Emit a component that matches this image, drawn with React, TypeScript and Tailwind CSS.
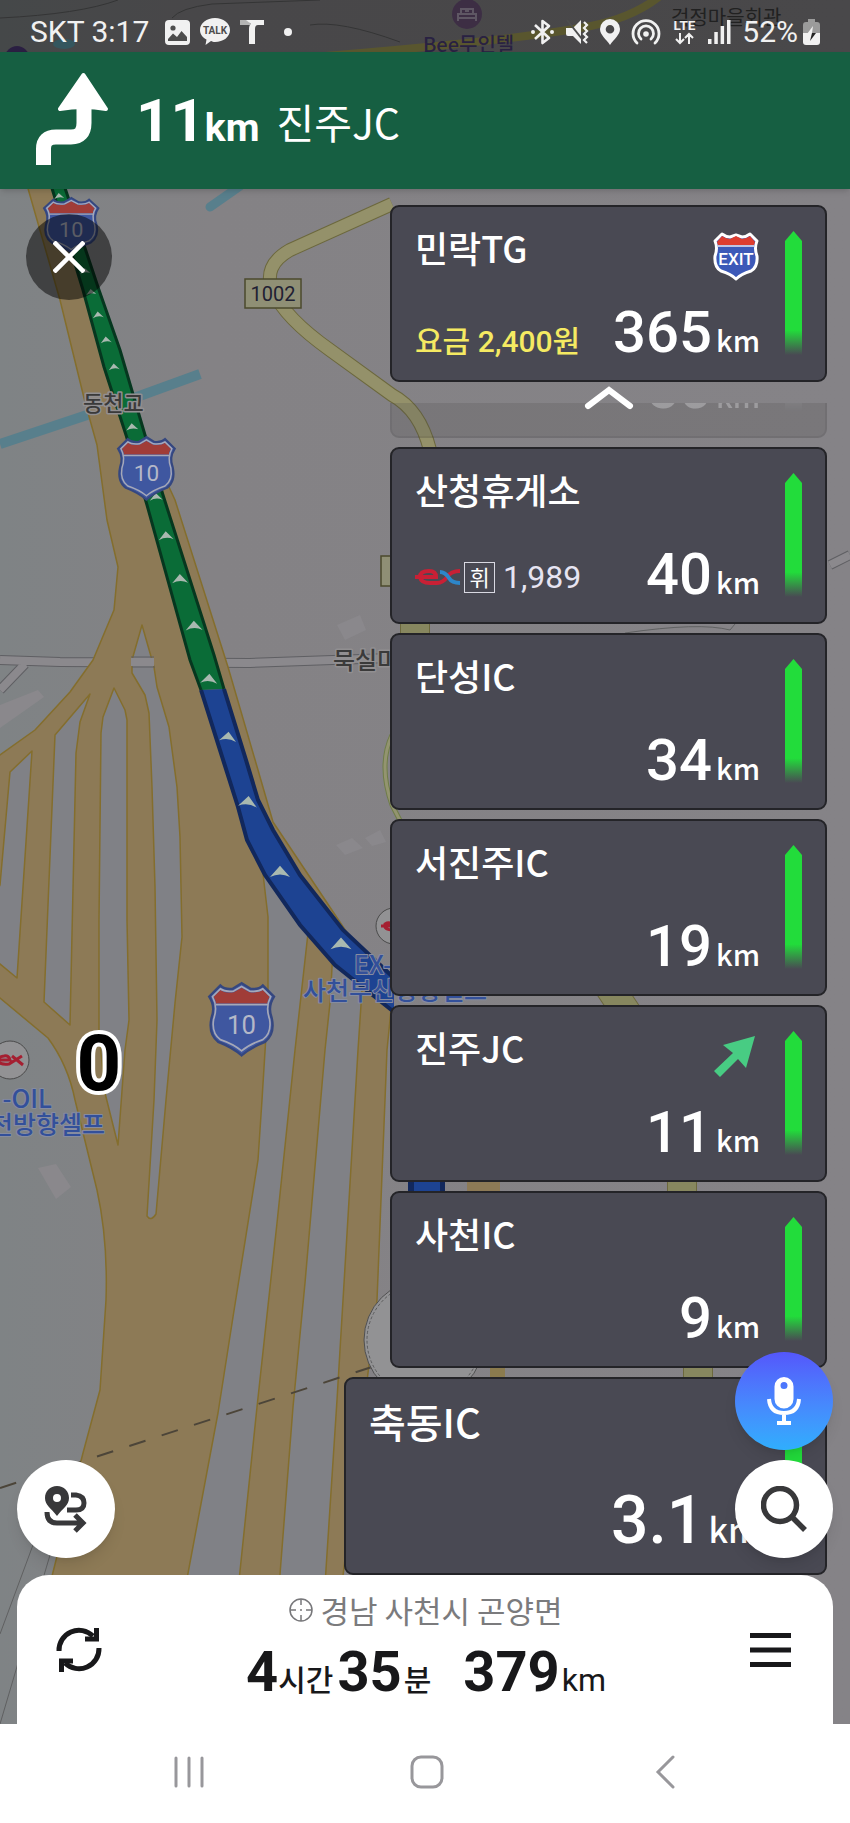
import type { ReactNode } from 'react';

const KR = "font-['Noto_Sans_CJK_KR',sans-serif]";
const NUM = "font-['Roboto','Noto_Sans_CJK_KR',sans-serif]";

type Stop = {
  name: string;
  distance: string;
  detail?: ReactNode;
  icon?: ReactNode;
  large?: boolean;
};

function ShieldShape({ transform, label }: { transform: string; label: string }) {
  return (
    <g transform={transform}>
      <path
        d="M30 1 L22 6 Q15 7 11 3 L1 13 Q7 22 3 32 Q0 46 9 53 Q22 58 30 65 Q38 58 51 53 Q60 46 57 32 Q53 22 59 13 L49 3 Q45 7 38 6 Z"
        fill="#3f57a0"
        stroke="#35477f"
        strokeWidth="2"
      />
      <path d="M30 5 L23 9 Q15 10 11 7 L5 13 Q7 16 7 19 H53 Q53 16 55 13 L49 7 Q45 10 37 9 Z" fill="#a03c38" />
      <path
        d="M30 4 L23 8 Q15 9 11 6 L4 13 Q9 22 5 33 Q3 45 11 51 Q23 55 30 61 Q37 55 49 51 Q57 45 55 33 Q51 22 56 13 L49 6 Q45 9 37 8 Z M7 20 H53"
        fill="none"
        stroke="#a5a8b8"
        strokeWidth="1.5"
      />
      <text x="30" y="46" textAnchor="middle" fontSize="23" fill="#b4b8c8" className={NUM}>
        {label}
      </text>
    </g>
  );
}

const chevrons = [
  [59, 196, 10, -6],
  [85, 271, 10, -6],
  [91, 292, 10, -6],
  [98, 315, 11, -6],
  [106, 340, 11, -6],
  [114, 367, 11, -6],
  [132, 427, 12, -6],
  [156, 497, 13, -4],
  [166, 536, 15, -4],
  [180, 579, 16, -2],
  [194, 626, 17, -2],
  [209, 679, 17, 4],
  [228, 737, 17, 6],
  [248, 802, 19, 6],
  [280, 872, 20, 0],
  [341, 944, 21, 0],
];

function MapCanvas() {
  return (
    <svg
      className="absolute inset-0 h-full w-full"
      viewBox="0 0 850 1823"
      preserveAspectRatio="xMidYMin slice"
      role="img"
      aria-label="지도"
    >
      <defs>
        <linearGradient id="ground" x1="0" y1="0" x2="1" y2="0">
          <stop offset="0" stopColor="#7f8385" />
          <stop offset="0.25" stopColor="#848285" />
          <stop offset="1" stopColor="#858387" />
        </linearGradient>
      </defs>
      <rect width="850" height="1823" fill="url(#ground)" />

      {/* buildings */}
      <g fill="#8a888c">
        <path d="M0 705 L38 690 L44 697 L0 728 Z M38 1168 L56 1164 L71 1187 L56 1199 Z M336 845 L352 838 L363 848 L345 855 Z M365 838 L380 830 L386 842 L372 846 Z M337 625 L360 615 L366 630 L345 640 Z" />
      </g>

      {/* minor roads */}
      <path d="M0 660 L60 662 L250 663 L390 658 M0 690 L25 664 M830 565 L850 555" fill="none" stroke="#5f5f63" strokeWidth="10" />
      <path d="M0 660 L60 662 L250 663 L390 658 M0 690 L25 664 M830 565 L850 555" fill="none" stroke="#8b898d" strokeWidth="8" />
      <g fill="none" stroke="#5f6061" strokeWidth="1">
        <path d="M33 1545 L0 1634 M50 1555 L0 1724 M0 18 Q80 14 118 0 M172 18 Q180 8 212 4 L320 0 M310 25 Q340 20 400 42 M625 633 Q700 622 730 630 L735 624" />
      </g>

      {/* local road */}
      <path d="M392 204 L290 250 Q262 266 273 291 Q285 318 330 350 L392 395 Q420 410 430 450" fill="none" stroke="#6c683d" strokeWidth="14" />
      <path d="M392 204 L290 250 Q262 266 273 291 Q285 318 330 350 L392 395 Q420 410 430 450" fill="none" stroke="#94916a" strokeWidth="12" />
      <path d="M300 58 Q500 42 580 28 Q630 20 660 -4" fill="none" stroke="#a39d54" strokeWidth="8" />
      <path d="M392 735 Q378 765 392 805 L410 840" fill="none" stroke="#6f7d48" strokeWidth="5" />
      <path d="M392 735 Q378 765 392 805 L410 840" fill="none" stroke="#939470" strokeWidth="3" />
      <path d="M415 620 V640 M608 985 L628 1015 M682 1175 V1200 M698 1360 V1385" stroke="#6c683d" strokeWidth="30" />
      <path d="M415 620 V640 M608 985 L628 1015 M682 1175 V1200 M698 1360 V1385" stroke="#87875f" strokeWidth="28" />

      {/* streams */}
      <path d="M0 444 L90 414 L200 374" fill="none" stroke="#587f8c" strokeWidth="10" />
      <path d="M210 207 L240 186" stroke="#587f8c" strokeWidth="9" strokeLinecap="round" />
      <ellipse cx="64" cy="44" rx="11" ry="5" fill="#5f9dab" />
      <circle cx="17" cy="58" r="12" fill="#4e3a78" />

      {/* motorway */}
      <g stroke="#846e2d" strokeWidth="1.5" strokeLinejoin="round">
        <path
          d="M27 185 L60 300 L85 402 L97 445 L107 520 L118 567 L114 610 L93 660 L70 692 L35 730 L0 755 L-5 757 V995 L0 998 L48 1038 Q68 1065 75 1100 L97 1190 Q108 1240 106 1300 L100 1390 L83 1453 L46 1600 L340 1600 L377 1300 L387 1050 L392 1000 L273 822 L258 770 L228 667 L175 500 L145 435 L60 185 Z"
          fill="#8d7a56"
        />
        <g fill="#808186">
          <path d="M142 625 L132 660 V673 L145 695 L149 713 L152 787 L155 887 L157 1020 L154 1100 L147 1216 Q151 1222 156 1214 L166 1100 L175 1003 L182 937 L180 837 L177 787 L169 727 L157 687 L154 667 Z" />
          <path d="M114 688 L125 710 L127 720 V920 L129 1020 L125 1050 L118 1145 L105 1093 L99 1033 V920 L101 733 L103 717 Z" />
          <path d="M90 694 L80 722 L76 753 L70 1025 L44 1002 L55 735 Z" />
          <path d="M32 751 L17 978 L-5 960 V895 L0 885 L10 772 Z" />
          <path d="M262 865 L268 917 V1003 L262 1100 L258 1160 L233 1317 L218 1413 L183 1600 H237 L257 1407 L277 1223 L295 1050 L308 933 Z" />
          <path d="M333 950 L330 1003 L325 1050 L305 1283 L293 1407 L278 1600 H324 L337 1400 L348 1217 L358 1050 L362 990 Z" />
        </g>
      </g>
      <path d="M131 657 H154 M132 667 H155" stroke="#5f5f63" strokeWidth="1" />
      <path d="M131 662 H154" stroke="#8b898d" strokeWidth="8" />
      <path d="M467 1170 H500 V1200 H467 Z" fill="#8d7a56" />
      <path d="M490 1360 H505 V1385 H490 Z" fill="#8b7b4e" />

      {/* route */}
      <path
        d="M51 185 L83 290 L104 367 L126 435 L147 505 L190 660 L201 690 L224 689 L214 655 L163 495 L145 435 L120 350 L99 290 L64 185 Z"
        fill="#0a6c37"
      />
      <path
        d="M201 690 L238 807 L247 840 L265 875 L300 925 L335 965 L360 985 L394 1012 V978 L343 930 L300 875 L273 830 L258 800 L246 760 L224 689 Z"
        fill="#1d4392"
      />
      <path
        d="M51 185 L83 290 L104 367 L126 435 L147 505 L190 660 L201 690 M224 689 L214 655 L163 495 L145 435 L120 350 L99 290 L64 185"
        fill="none"
        stroke="#06371f"
        strokeWidth="3"
      />
      <path
        d="M201 690 L238 807 L247 840 L265 875 L300 925 L335 965 L360 985 L394 1012 M394 978 L343 930 L300 875 L273 830 L258 800 L246 760 L224 689"
        fill="none"
        stroke="#12285c"
        strokeWidth="4"
      />
      <path d="M411 1170 V1200 M442 1170 V1200" stroke="#12285c" strokeWidth="6" />
      <path d="M414 1170 H440 V1200 H414 Z" fill="#1d4392" />
      <g fill="#a9b9b0">
        {chevrons.map(([x, y, s, r]) => (
          <path
            key={`${x}-${y}`}
            d="M0 -5 L8 4 Q0 0 -8 4 Z"
            transform={`translate(${x} ${y}) rotate(${r}) scale(${s / 16})`}
          />
        ))}
      </g>

      <path d="M0 1488 L372 1367" stroke="#4c4539" strokeWidth="2" strokeDasharray="17 17" />
      <circle cx="424" cy="1340" r="60" fill="#929294" stroke="#4f4f50" strokeWidth="1" />
      <circle cx="424" cy="1340" r="57" fill="none" stroke="#5c5c5d" strokeWidth="1" strokeDasharray="3 2" />

      <ShieldShape transform="translate(43 197) scale(.94 .86)" label="10" />
      <ShieldShape transform="translate(117 436) scale(.98 .98)" label="10" />
      <ShieldShape transform="translate(208 982) scale(1.12 1.13)" label="10" />

      <rect x="245" y="279" width="56" height="29" fill="#8f8f75" stroke="#4b4a2d" strokeWidth="1.5" />
      <text x="273" y="301" textAnchor="middle" fontSize="20" fill="#1f2133" className={NUM}>
        1002
      </text>
      <rect x="381" y="556" width="40" height="30" fill="#8f8f75" stroke="#4b4a2d" strokeWidth="1.5" />

      <g className={KR} strokeLinejoin="round">
        <g fill="#3a3a3a" stroke="#918f91" strokeWidth="3" paintOrder="stroke" fontWeight="500">
          <text x="83" y="411" fontSize="22">동천교</text>
          <text x="333" y="669" fontSize="24">묵실마을</text>
        </g>
        <g fill="#33509a" stroke="#868ca0" strokeWidth="2" paintOrder="stroke" fontWeight="500" fontSize="25">
          <text x="354" y="974">EX-OIL</text>
          <text x="303" y="1000">사천부산방향셀프</text>
          <text x="52" y="1108" textAnchor="end">-OIL</text>
          <text x="105" y="1134" textAnchor="end">천방향셀프</text>
        </g>
      </g>

      <g fill="none" stroke="#a51f31" strokeWidth="3">
        <circle cx="10" cy="1060" r="19" fill="#929294" stroke="#4a4a4a" strokeWidth="1" />
        <path d="M0 1060 H10 Q9 1055 4 1056 Q-3 1057 -3 1061 Q0 1065 9 1064 L22 1056 M12 1056 L23 1065" />
        <circle cx="394" cy="926" r="18" fill="#929294" stroke="#4a4a4a" strokeWidth="1" />
        <path d="M381 926 H394 Q390 921 385 924 Q383 930 394 930" />
      </g>

      <g opacity=".8">
        <circle cx="467" cy="14" r="15" fill="#6a4a7c" />
        <path d="M458 21 V14 H476 V21 M461 13 V9 H466 V12 M468 12 V9 H473 V13 M458 18 H476" fill="none" stroke="#b9a6c4" strokeWidth="2" />
      </g>
      <g className={KR}>
        <text x="423" y="52" fontSize="20" fill="#4b3d78" fontWeight="500">Bee무인텔</text>
        <text x="671" y="25" fontSize="20" fill="#3c3c3c" fontWeight="400">걱정마을회관</text>
      </g>

      <text
        x="99"
        y="1090"
        textAnchor="middle"
        fontSize="78"
        fontWeight="700"
        fill="#000"
        stroke="#fff"
        strokeWidth="8"
        strokeLinejoin="round"
        paintOrder="stroke"
        className={NUM}
      >
        0
      </text>
    </svg>
  );
}

function StatusBar() {
  return (
    <div className={`${NUM} flex h-[52px] items-center justify-between bg-black/45 pt-3 pr-[30px] pl-[30px] text-[30px] leading-10 text-[#f1f1f1]`}>
      <div className="flex items-center gap-[10px]">
        <span className="mr-1.5">SKT 3:17</span>
        <svg width="25" height="25" viewBox="0 0 25 25">
          <rect width="25" height="25" rx="4" fill="#f1f1f1" />
          <circle cx="8" cy="8" r="2.6" fill="#4d4d4d" />
          <path d="M3 19 L8 13.500 L12 17 L16.500 11 L22 17 V21 H3 Z" fill="#4d4d4d" />
        </svg>
        <svg width="30" height="28" viewBox="0 0 30 28">
          <path d="M15 0 C6.700 0 0 5 0 12 C0 16 2.500 19.500 6.500 21.500 L5.500 27 L11 23 C12 23.500 13.500 24 15 24 C23.300 24 30 19 30 12 C30 5 23.300 0 15 0 Z" fill="#f1f1f1" />
          <text x="15" y="16" textAnchor="middle" fontSize="10" fontWeight="700" fill="#4d4d4d">TALK</text>
        </svg>
        <svg width="24" height="24" viewBox="0 0 24 24">
          <path d="M0 0 H8 L11 5 H0 Z" fill="#b5b5b5" />
          <path d="M6 0 H24 V5 H18 Q15 5 15 9 V24 H9 V9 Q9 5 11 4 Z" fill="#f1f1f1" />
        </svg>
        <span className="ml-2.5 h-2 w-2 rounded-full bg-[#f1f1f1]" />
      </div>
      <div className="flex items-center gap-[11px]">
        <svg width="23" height="26" viewBox="0 0 23 26" fill="none" stroke="#f1f1f1" strokeWidth="2.600">
          <path d="M4 6 L18 19 L11.500 24 V2 L18 7 L4 20" strokeLinejoin="round" />
          <circle cx="2" cy="13" r="1" strokeWidth="2" />
          <circle cx="21" cy="13" r="1" strokeWidth="2" />
        </svg>
        <svg width="24" height="26" viewBox="0 0 24 26" fill="#f1f1f1">
          <path d="M1 9 H8 L16 1 V25 L8 17 H3 Q1 17 1 15 Z" />
          <path d="M2 1 L17 20" stroke="#4d4d4d" strokeWidth="2" />
          <path d="M19 3 L22 6 L19 9 L22 12 L19 15 L22 18 L19 21 L22 24" fill="none" stroke="#f1f1f1" strokeWidth="2.200" />
        </svg>
        <svg width="20" height="26" viewBox="0 0 20 26" fill="#f1f1f1">
          <path fillRule="evenodd" d="M10 0 A10 10 0 0 0 0 10 C0 16 6 20 10 26 C14 20 20 16 20 10 A10 10 0 0 0 10 0 Z M10 6 A4.300 4.300 0 1 1 10 14.600 A4.300 4.300 0 1 1 10 6 Z" />
        </svg>
        <svg width="30" height="26" viewBox="0 0 30 26" fill="none" stroke="#f1f1f1" strokeWidth="2.800" strokeLinecap="round">
          <path d="M6 24 A13 13 0 1 1 24 24" />
          <path d="M10 20 A7.500 7.500 0 1 1 20 20" />
          <circle cx="15" cy="15" r="2.800" fill="#f1f1f1" stroke="none" />
        </svg>
        <svg width="25" height="26" viewBox="0 0 25 26" fill="none" stroke="#f1f1f1">
          <text x="12.500" y="11" textAnchor="middle" fontSize="13.500" fontWeight="700" fill="#f1f1f1" stroke="none">LTE</text>
          <path d="M8 14 V24 M4 20 L8 24 L12 20 M17 25 V15 M13 19 L17 15 L21 19" strokeWidth="2" />
        </svg>
        <svg width="23" height="24" viewBox="0 0 23 24" fill="#f1f1f1">
          <rect x="0" y="19" width="3.500" height="5" />
          <rect x="6.300" y="12" width="3.500" height="12" />
          <rect x="12.600" y="6" width="3.500" height="18" />
          <rect x="19" y="0" width="3.500" height="24" />
        </svg>
        <span className="flex items-center gap-[5px]">
          <span>52%</span>
          <svg width="17" height="26" viewBox="0 0 17 26">
            <path d="M5 0 H12 V3 H14 Q17 3 17 6 V15 H0 V6 Q0 3 3 3 H5 Z" fill="#9b9b9b" />
            <path d="M0 14 H17 V23 Q17 26 14 26 H3 Q0 26 0 23 Z" fill="#f1f1f1" />
            <path d="M10 7 L4 15 H8 L7 22 L13 14 H9 Z" fill="#f1f1f1" />
            <path d="M13 14 H9 L7 22 Z" fill="#222" />
          </svg>
        </span>
      </div>
    </div>
  );
}

function TurnBanner() {
  return (
    <header className="flex h-[137px] items-center bg-[#165f42] px-9 text-white shadow-md">
      <svg width="72" height="94" viewBox="0 0 72 94" className="mb-1" aria-label="우측 방향">
        <path d="M7.500 93 V77 Q7.500 65 20 65 H35 Q48 65 48 51 V34" fill="none" stroke="#fff" strokeWidth="15" />
        <path d="M47.500 3 L24 37 Q47.500 33 70 37 Z" fill="#fff" stroke="#fff" strokeWidth="4" strokeLinejoin="round" />
      </svg>
      <div className={`${NUM} ml-7 flex items-baseline font-bold`}>
        <span className="text-[60px] leading-[64px]">11</span>
        <span className="text-[39px] leading-10">km</span>
      </div>
      <span className={`${KR} ml-[17px] text-[41px] leading-10 font-normal`}>진주JC</span>
    </header>
  );
}

function StopCard({ name, distance, detail, icon, large }: Stop) {
  return (
    <article
      className={`flex shrink-0 gap-[25px] rounded-[9px] border-2 border-[#242428] bg-[#494953] px-[23px] py-6 text-white ${
        large ? 'h-[198px] w-[483px]' : 'h-[177px] w-[437px]'
      }`}
    >
      <div className={`flex min-w-0 flex-1 flex-col justify-between ${large ? 'pb-1' : ''}`}>
        <div className="flex h-12 items-start justify-between">
          <h2 className={`${KR} font-medium ${large ? 'text-[40px] leading-9' : 'text-[36px] leading-8'}`}>{name}</h2>
          {icon}
        </div>
        <div className="flex items-baseline justify-between">
          <div className={`${NUM} flex items-center leading-6`}>{detail}</div>
          <div className="flex items-baseline gap-1">
            <span className={`${NUM} font-medium ${large ? 'text-[66px] leading-[48px]' : 'text-[58px] leading-[48px]'}`}>
              {distance}
            </span>
            <span className={`${KR} font-medium ${large ? 'text-[34px] leading-6' : 'text-[29px] leading-5'}`}>km</span>
          </div>
        </div>
      </div>
      <div className="h-[124px] w-[17px] bg-gradient-to-b from-[#22dc3b] from-80% to-transparent [clip-path:polygon(50%_0,100%_10px,100%_100%,0_100%,0_10px)]" />
    </article>
  );
}

const exitIcon = (
  <svg width="48" height="50" viewBox="0 0 48 50" aria-label="출구">
    <path
      d="M24 4 L18 6 Q14 6 10 3 L3 10 Q6 17 3 25 Q2 36 9 40 Q19 43 24 48 Q29 43 39 40 Q46 36 45 25 Q42 17 45 10 L38 3 Q34 6 30 6 Z"
      fill="#3c59b8"
      stroke="#fff"
      strokeWidth="3"
      strokeLinejoin="round"
    />
    <path d="M24 5 L18 8 Q14 8 10 5 L5 11 L6 14 H42 L43 11 L38 5 Q34 8 30 8 Z" fill="#dd3d30" />
    <path d="M6 15 H42" stroke="#e8e8f4" strokeWidth="1.500" />
    <text x="24" y="34" textAnchor="middle" fontSize="17" fontWeight="500" fill="#fff" className={NUM}>
      EXIT
    </text>
  </svg>
);

const forkIcon = (
  <svg width="48" height="48" viewBox="0 0 48 48" aria-label="분기">
    <path d="M43 5 L34 37 L26 28 L8 46 L2 40 L21 22 L11 14 Z" fill="#48cc83" />
  </svg>
);

const fuelDetail = (
  <>
    <svg width="46" height="34" viewBox="0 -7 46 34" fill="none" strokeWidth="4" aria-label="ex">
      <path d="M0 10 H21 Q21 4 14 4 Q5 4 5 10 Q6 16 15 16 H22 Q28 16 32 10 Q36 4 45 4" stroke="#c92035" />
      <path d="M25 5 Q30 5 34 11 Q37 16 45 16" stroke="#2d86c9" />
    </svg>
    <span className={`${KR} mr-2 ml-[3px] flex h-[31px] w-[31px] items-center justify-center border border-[#d9d9e2] pb-[2px] text-[22px] leading-6`}>
      휘
    </span>
    <span className="text-[32px] text-[#e6e4f2]">1,989</span>
  </>
);

const upcoming: Stop[] = [
  { name: '산청휴게소', distance: '40', detail: fuelDetail },
  { name: '단성IC', distance: '34' },
  { name: '서진주IC', distance: '19' },
  { name: '진주JC', distance: '11', icon: forkIcon },
  { name: '사천IC', distance: '9' },
  { name: '축동IC', distance: '3.1', large: true },
];

export default function App() {
  return (
    <main className="relative flex min-h-screen flex-col overflow-hidden bg-[#858387]">
      <MapCanvas />

      <div className="relative flex flex-1 flex-col">
        <StatusBar />
        <TurnBanner />

        <section className="relative flex flex-1 items-start justify-between pr-[23px] pl-[26px]">
          <button
            type="button"
            aria-label="닫기"
            className="mt-[25px] flex h-[86px] w-[86px] items-center justify-center rounded-full bg-black/50"
          >
            <svg width="32" height="32" viewBox="0 0 32 32" stroke="#fff" strokeWidth="4.500">
              <path d="M1 1 L31 31 M31 1 L1 31" />
            </svg>
          </button>

          <div className="flex flex-col items-end pt-4">
            <StopCard
              name="민락TG"
              distance="365"
              icon={exitIcon}
              detail={<span className="text-[30px] font-medium text-[#f5ea62]">요금 2,400원</span>}
            />
            <div className="relative pt-[21px] pb-[9px]">
              <div className="flex h-[35px] items-end overflow-hidden">
                <div className="opacity-20 grayscale">
                  <StopCard name="산청IC" distance="50" />
                </div>
              </div>
              <button type="button" aria-label="위로 펼치기" className="absolute top-[3px] left-1/2 -translate-x-1/2">
                <svg width="50" height="26" viewBox="0 0 50 26" fill="none" stroke="#fff" strokeWidth="6" strokeLinecap="round">
                  <path d="M4 21 L25 5 L46 21" />
                </svg>
              </button>
            </div>
            <div className="flex flex-col items-end gap-[9px]">
              {upcoming.map((stop) => (
                <StopCard key={stop.name} {...stop} />
              ))}
            </div>
          </div>

          <button
            type="button"
            aria-label="경로"
            className="absolute bottom-[17px] left-[17px] flex h-[98px] w-[98px] items-center justify-center rounded-full bg-white shadow-lg"
          >
            <svg width="44" height="48" viewBox="0 0 44 48" fill="none" stroke="#38383a" strokeWidth="5">
              <path
                d="M13 1 C6 1 1 6 1 13 C1 20 7 23 13 31 C19 23 25 20 25 13 C25 6 20 1 13 1 Z M13 9 A4 4 0 1 1 13 17 A4 4 0 1 1 13 9 Z"
                fill="#38383a"
                fillRule="evenodd"
                stroke="none"
              />
              <path d="M27 10 H32 Q40 11 40 18 Q40 25 32 25 H23" />
              <path d="M3 27 Q3 38 13 38 H39 M31 30 L39 38 L31 46" />
            </svg>
          </button>
          <div className="absolute right-[17px] bottom-[17px] flex flex-col gap-[10px]">
            <button
              type="button"
              aria-label="음성 검색"
              className="flex h-[98px] w-[98px] items-center justify-center rounded-full bg-gradient-to-b from-[#5456fb] to-[#2faefd] shadow-lg"
            >
              <svg width="34" height="48" viewBox="0 0 34 48" fill="none" stroke="#fff">
                <path
                  d="M17 0 A9.500 9.500 0 0 0 7.500 9.500 V22 A9.500 9.500 0 0 0 26.500 22 V9.500 A9.500 9.500 0 0 0 17 0 Z M17 5 A3.500 3.500 0 1 1 17 12 A3.500 3.500 0 1 1 17 5 Z"
                  fill="#fff"
                  fillRule="evenodd"
                  stroke="none"
                />
                <path d="M2 22 Q3 36 17 36 Q31 36 32 22 M17 36 V45 M10 46 H24" strokeWidth="4" />
              </svg>
            </button>
            <button
              type="button"
              aria-label="검색"
              className="flex h-[98px] w-[98px] items-center justify-center rounded-full bg-white shadow-lg"
            >
              <svg width="46" height="46" viewBox="0 0 46 46" fill="none" stroke="#38383a" strokeWidth="5.500">
                <circle cx="19" cy="19" r="16.500" />
                <path d="M31 31 L44 44" />
              </svg>
            </button>
          </div>
        </section>

        <section className="mx-[17px] flex h-[149px] items-center justify-between rounded-t-[32px] bg-white pr-[41px] pl-[39px] text-[#18181a]">
          <button type="button" aria-label="경로 재탐색">
            <svg width="46" height="48" viewBox="0 0 46 48" fill="none" stroke="#18181a" strokeWidth="5">
              <path d="M3 25 A20 20 0 0 1 37 10 M43 22 A20 20 0 0 1 9 37" />
              <path d="M40.500 2 V13 H29 M5.500 46 V35 H17" />
            </svg>
          </button>
          <div className="flex flex-col items-center pb-2">
            <div className={`${KR} flex items-center gap-[7px] text-[31px] leading-9 font-normal text-[#7b7b7d]`}>
              <svg width="24" height="24" viewBox="0 0 24 24" fill="none" stroke="#77777a" strokeWidth="1.500">
                <circle cx="12" cy="12" r="11" />
                <path d="M12 1 V7 M12 17 V23 M1 12 H7 M17 12 H23 M11 12 H13" />
              </svg>
              경남 사천시 곤양면
            </div>
            <div className="mt-4 flex items-baseline">
              <span className={`${NUM} text-[56px] leading-[56px] font-bold`}>4</span>
              <span className={`${KR} mr-1 text-[30px] leading-8 font-medium`}>시간</span>
              <span className={`${NUM} text-[56px] leading-[56px] font-bold`}>35</span>
              <span className={`${KR} mr-8 ml-[2px] text-[30px] leading-8 font-medium`}>분</span>
              <span className={`${NUM} text-[56px] leading-[56px] font-bold`}>379</span>
              <span className={`${NUM} ml-[2px] text-[32px] leading-8`}>km</span>
            </div>
          </div>
          <button type="button" aria-label="메뉴">
            <svg width="42" height="34" viewBox="0 0 42 34" stroke="#18181a" strokeWidth="5">
              <path d="M0 2.500 H41 M0 17 H41 M0 31.500 H41" />
            </svg>
          </button>
        </section>

        <nav className="grid h-[99px] grid-cols-3 items-center justify-items-center bg-white pr-[66px] pb-1 pl-[70px]">
          <button type="button" aria-label="최근 앱">
            <svg width="32" height="32" viewBox="0 0 32 32" stroke="#98979b" strokeWidth="3" strokeLinecap="round">
              <path d="M3 2 V30 M16 2 V30 M29 2 V30" />
            </svg>
          </button>
          <button type="button" aria-label="홈">
            <svg width="34" height="34" viewBox="0 0 34 34" fill="none" stroke="#98979b" strokeWidth="3">
              <rect x="2" y="2" width="30" height="30" rx="9" />
            </svg>
          </button>
          <button type="button" aria-label="뒤로">
            <svg width="20" height="34" viewBox="0 0 20 34" fill="none" stroke="#98979b" strokeWidth="3" strokeLinecap="round">
              <path d="M18 2 L3 17 L18 32" />
            </svg>
          </button>
        </nav>
      </div>
    </main>
  );
}
